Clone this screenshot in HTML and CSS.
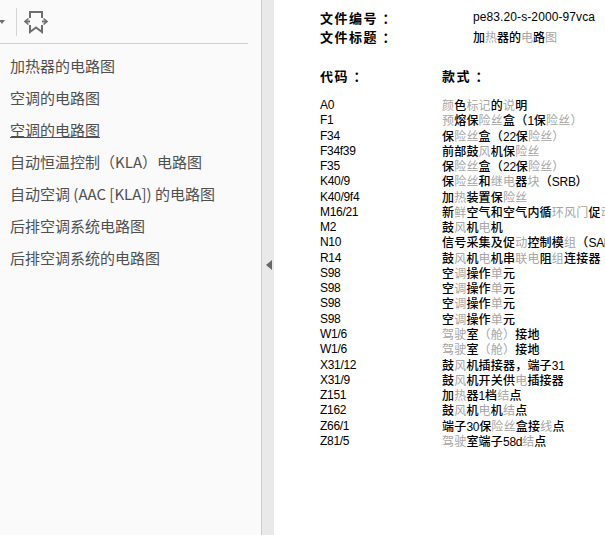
FILE: index.html
```html
<!DOCTYPE html>
<html lang="zh-CN">
<head>
    <meta charset="UTF-8">
    <title>加热器的电路图</title>
    <link rel="stylesheet" href="styles.css">
</head>
<body>

    <!-- Bookmarks panel -->
    <div class="sidebar">
        <div class="toolbar">
            <span class="drop-arrow"></span>
            <span class="tool-sep"></span>
            <svg class="bookmark-icon" width="24" height="24" viewBox="0 0 24 24" fill="none" stroke="#6e6e6e" stroke-width="2">
                <path d="M6 8V2H18V8"/>
                <path d="M6 15V22L12 17.5L18 22V15"/>
                <path d="M1 11.500H6M18 11.500H23"/>
                <path d="M4.500 8.500L1 11.500L4.500 14.500M19.500 8.500L23 11.500L19.500 14.500" stroke-width="1.600"/>
            </svg>
        </div>
        <ul class="bookmarks">
            <li>加热器的电路图</li>
            <li>空调的电路图</li>
            <li class="current">空调的电路图</li>
            <li>自动恒温控制（KLA）电路图</li>
            <li>自动空调 (AAC [KLA]) 的电路图</li>
            <li>后排空调系统电路图</li>
            <li>后排空调系统的电路图</li>
        </ul>
    </div>

    <div class="splitter"><span class="collapse-arrow"></span></div>

    <!-- Document page -->
    <div class="page">
        <div class="meta-row">
            <span class="meta-label">文件编号 ：</span>
            <span class="latin doc-no">pe83.20-s-2000-97vca</span>
        </div>
        <div class="meta-row">
            <span class="meta-label">文件标题 ：</span>
            <span class="meta-value">加<i>热</i>器的<i>电</i>路<i>图</i></span>
        </div>

        <div class="table-head">
            <span>代码 ：</span>
            <span>款式 ：</span>
        </div>

        <div class="row"><span class="code latin">A0</span><span class="name"><i>颜</i>色<i>标记</i>的<i>说</i>明</span></div>
        <div class="row"><span class="code latin">F1</span><span class="name"><i>预</i>熔保<i>险丝</i>盒（<b class="latin">1</b>保<i>险丝）</i></span></div>
        <div class="row"><span class="code latin">F34</span><span class="name">保<i>险丝</i>盒（<b class="latin">22</b>保<i>险丝）</i></span></div>
        <div class="row"><span class="code latin">F34f39</span><span class="name">前部鼓<i>风</i>机保<i>险丝</i></span></div>
        <div class="row"><span class="code latin">F35</span><span class="name">保<i>险丝</i>盒（<b class="latin">22</b>保<i>险丝）</i></span></div>
        <div class="row"><span class="code latin">K40/9</span><span class="name">保<i>险丝</i>和<i>继电</i>器<i>块</i>（<b class="latin">SRB</b>）</span></div>
        <div class="row"><span class="code latin">K40/9f4</span><span class="name">加<i>热</i>装置保<i>险丝</i></span></div>
        <div class="row"><span class="code latin">M16/21</span><span class="name">新<i>鲜</i>空气和空气内循<i>环风门</i>促<i>动</i></span></div>
        <div class="row"><span class="code latin">M2</span><span class="name">鼓<i>风</i>机<i>电</i>机</span></div>
        <div class="row"><span class="code latin">N10</span><span class="name">信号采集及促<i>动</i>控制模<i>组</i>（<b class="latin">SAM</b>）</span></div>
        <div class="row"><span class="code latin">R14</span><span class="name">鼓<i>风</i>机<i>电</i>机串<i>联电</i>阻<i>组</i>连接器</span></div>
        <div class="row"><span class="code latin">S98</span><span class="name">空<i>调</i>操作<i>单</i>元</span></div>
        <div class="row"><span class="code latin">S98</span><span class="name">空<i>调</i>操作<i>单</i>元</span></div>
        <div class="row"><span class="code latin">S98</span><span class="name">空<i>调</i>操作<i>单</i>元</span></div>
        <div class="row"><span class="code latin">S98</span><span class="name">空<i>调</i>操作<i>单</i>元</span></div>
        <div class="row"><span class="code latin">W1/6</span><span class="name"><i>驾驶</i>室<i>（舱）</i>接地</span></div>
        <div class="row"><span class="code latin">W1/6</span><span class="name"><i>驾驶</i>室<i>（舱）</i>接地</span></div>
        <div class="row"><span class="code latin">X31/12</span><span class="name">鼓<i>风</i>机插接器，端子<b class="latin">31</b></span></div>
        <div class="row"><span class="code latin">X31/9</span><span class="name">鼓<i>风</i>机开关供<i>电</i>插接器</span></div>
        <div class="row"><span class="code latin">Z151</span><span class="name">加<i>热</i>器<b class="latin">1</b>档<i>结</i>点</span></div>
        <div class="row"><span class="code latin">Z162</span><span class="name">鼓<i>风</i>机<i>电</i>机<i>结</i>点</span></div>
        <div class="row"><span class="code latin">Z66/1</span><span class="name">端子<b class="latin">30</b>保<i>险丝</i>盒接<i>线</i>点</span></div>
        <div class="row"><span class="code latin">Z81/5</span><span class="name"><i>驾驶</i>室端子<b class="latin">58d</b><i>结</i>点</span></div>
    </div>

</body>
</html>
```

FILE: styles.css
```css
html, body {
    height: 100%;
}

body {
    margin: 0;
    display: flex;
    overflow: hidden;
    background: #fff;
    font-family: "Noto Sans CJK SC", sans-serif;
}

/* Bookmarks panel */
.sidebar {
    width: 261px;
    flex-shrink: 0;
    background: #fafafa;
    overflow: hidden;
}

.toolbar {
    display: flex;
    align-items: center;
    height: 43px;
    width: 248px;
    border-bottom: 1px solid #cfcfcf;
}

.drop-arrow {
    width: 0;
    height: 0;
    margin-left: -1px;
    border-left: 3.500px solid transparent;
    border-right: 3.500px solid transparent;
    border-top: 4px solid #707070;
}

.tool-sep {
    width: 1px;
    height: 28px;
    margin-left: 11px;
    background: #d4d4d4;
}

.bookmark-icon {
    margin-left: 7px;
}

.bookmarks {
    list-style: none;
    margin: 0;
    padding: 6px 0 0 10px;
    font-size: 15px;
    color: #505050;
}

.bookmarks li {
    height: 32px;
    line-height: 32px;
    white-space: nowrap;
}

.bookmarks .current {
    text-decoration: underline;
}

.splitter {
    display: flex;
    align-items: center;
    width: 12px;
    flex-shrink: 0;
    background: #e9e9e9;
    border-left: 1px solid #cdcdcd;
}

.collapse-arrow {
    width: 0;
    height: 0;
    margin: 0 0 6px 4px;
    border-top: 5.500px solid transparent;
    border-bottom: 5.500px solid transparent;
    border-right: 6px solid #686868;
}

/* Document page */
.page {
    flex: 1;
    min-width: 0;
    padding: 8px 0 0 46px;
    overflow: hidden;
    white-space: nowrap;
    color: #000;
    font-size: 12px;
}

.page i {
    font-style: normal;
    font-weight: 400;
    color: #a6a6a6;
}

/* half-width latin, about 6px a character */
.latin {
    font-family: "Liberation Sans", sans-serif;
    font-size: 12px;
    font-weight: 400;
    letter-spacing: -0.300px;
}

.doc-no {
    letter-spacing: 0.100px;
}

.meta-row {
    display: flex;
    height: 19px;
    line-height: 19px;
}

.meta-label {
    width: 153px;
    font-size: 13px;
    font-weight: 700;
    letter-spacing: 1.500px;
}

.meta-value {
    font-weight: 500;
}

.table-head {
    display: flex;
    height: 19px;
    line-height: 19px;
    margin: 20px 0 12px;
    font-size: 13px;
    font-weight: 700;
    letter-spacing: 1.500px;
}

.table-head span:first-child {
    width: 122px;
}

.row {
    display: flex;
    height: 15.270px;
    line-height: 15.270px;
}

.code {
    width: 122px;
    flex-shrink: 0;
    padding-top: 1px;
}

.name {
    font-weight: 500;
    letter-spacing: 0.200px;
}
```
